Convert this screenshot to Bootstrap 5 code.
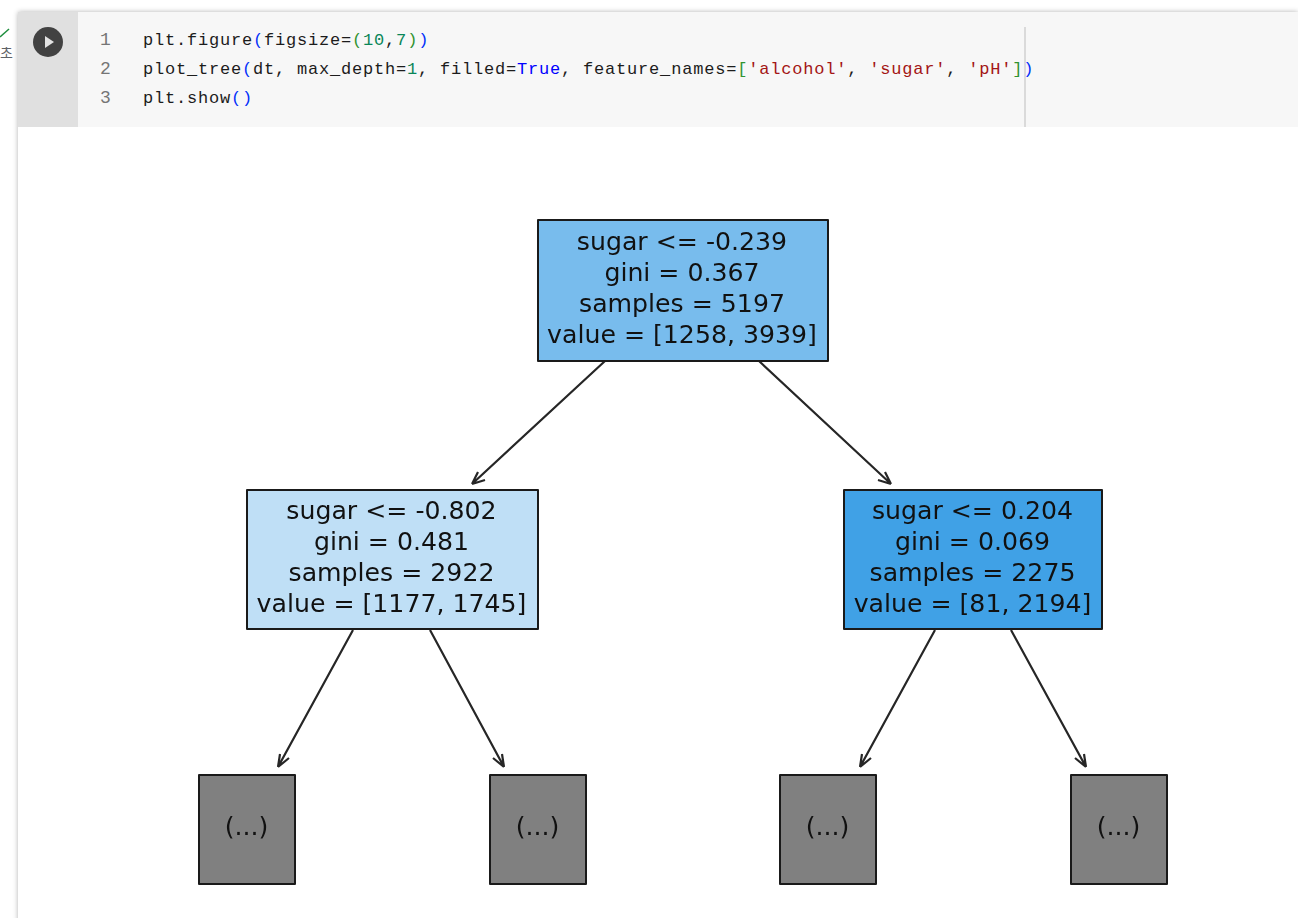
<!DOCTYPE html>
<html lang="ko">
<head>
<meta charset="utf-8">
<title>plot_tree</title>
<link href="https://cdn.jsdelivr.net/npm/bootstrap@5.3.0/dist/css/bootstrap.min.css" rel="stylesheet">
<style>
html,body{height:918px;overflow:hidden;background:#fff}
.page-shell{height:918px;padding-top:12px}
.status-gutter{width:18px;flex:none;padding-top:16px;overflow:hidden}
.status-check{display:block;width:10px;height:11px}
.status-time{display:block;font:14px/14px "Noto Sans CJK KR",sans-serif;color:#5f6368;margin:6px 0 0 0;white-space:nowrap}
.nb-cell{flex:1 1 auto;min-width:0;box-shadow:0 0 5px rgba(0,0,0,.3);background:#fff;height:940px}
.cell-head{height:115px}
.run-gutter{width:60px;flex:none;background:#e0e0e0;padding:15px 0 0 15px}
.run-btn{display:block;width:30px;height:30px}
.code-area{flex:1 1 auto;background:#f7f7f7;padding-top:14px;position:relative;overflow:hidden}
.code-line{height:29px;line-height:29px;font-family:"Liberation Mono",monospace;font-size:17px;letter-spacing:.8px;white-space:pre;color:#1c1c1c;display:flex}
.ln{width:65px;flex:none;text-align:left;padding-left:22px;color:#757575;font-size:18px;letter-spacing:0}
.ruler{position:absolute;left:946px;top:15px;bottom:0;width:2px;background:#dadada}
.pa{color:#0431fa}.pb{color:#319331}.nu{color:#098658}.kw{color:#00f}.st{color:#a31515}
.tree-canvas{position:relative;height:790px;filter:blur(.5px)}
.arrows{position:absolute;left:0;top:0;width:1280px;height:790px}
.tnode{position:absolute;border:2px solid #1a1a1a;border-radius:1px;color:#111;font-family:"DejaVu Sans",sans-serif;font-size:25.2px;line-height:31px;text-align:center;display:flex;flex-direction:column;align-items:center;justify-content:center;white-space:nowrap}
.n-root{left:519px;top:92px;width:292px;height:143px;background:#78bced;padding:0 2px 6px 0}
.n-left{left:228px;top:362px;width:293px;height:141px;background:#bfdff6;padding:0 2px 5px 0}
.n-right{left:825px;top:362px;width:260px;height:141px;background:#40a1e6;padding:0 1px 5px 0}
.n-leaf{top:647px;width:98px;height:111px;background:#808080;padding:0 1px 6px 0}
.l1{left:180px}.l2{left:471px}.l3{left:761px}.l4{left:1052px}
</style>
</head>
<body>
<div class="page-shell d-flex">
  <div class="status-gutter">
    <svg class="status-check" viewBox="0 0 10 11"><path d="M0 9 L9 1" stroke="#1e8e3e" stroke-width="1.5" fill="none"/></svg>
    <span class="status-time">초</span>
  </div>
  <div class="nb-cell">
    <div class="cell-head d-flex">
      <div class="run-gutter">
        <svg class="run-btn" viewBox="0 0 30 30"><circle cx="15" cy="15" r="15" fill="#424242"/><path d="M12 9 L21 15 L12 21 Z" fill="#e3e3e3"/></svg>
      </div>
      <div class="code-area">
        <div class="code-line"><span class="ln">1</span><span>plt.figure<span class="pa">(</span>figsize=<span class="pb">(</span><span class="nu">10</span>,<span class="nu">7</span><span class="pb">)</span><span class="pa">)</span></span></div>
        <div class="code-line"><span class="ln">2</span><span>plot_tree<span class="pa">(</span>dt, max_depth=<span class="nu">1</span>, filled=<span class="kw">True</span>, feature_names=<span class="pb">[</span><span class="st">'alcohol'</span>, <span class="st">'sugar'</span>, <span class="st">'pH'</span><span class="pb">]</span><span class="pa">)</span></span></div>
        <div class="code-line"><span class="ln">3</span><span>plt.show<span class="pa">()</span></span></div>
        <div class="ruler"></div>
      </div>
    </div>
    <div class="tree-canvas">
      <svg class="arrows" viewBox="0 0 1280 790" fill="none" stroke="#262626" stroke-width="2.2">
        <path d="M587 234 L454 357 M454 357 L467 353 M454 357 L460 345"/>
        <path d="M741 234 L873 357 M873 357 L860 353 M873 357 L867 345"/>
        <path d="M335 503 L260 640 M260 640 L271 631 M260 640 L262 627"/>
        <path d="M412 503 L486 640 M486 640 L475 631 M486 640 L484 627"/>
        <path d="M917 503 L842 640 M842 640 L853 631 M842 640 L844 627"/>
        <path d="M993 503 L1068 640 M1068 640 L1057 631 M1068 640 L1066 627"/>
      </svg>
      <div class="tnode n-root"><span>sugar &lt;= -0.239</span><span>gini = 0.367</span><span>samples = 5197</span><span>value = [1258, 3939]</span></div>
      <div class="tnode n-left"><span>sugar &lt;= -0.802</span><span>gini = 0.481</span><span>samples = 2922</span><span>value = [1177, 1745]</span></div>
      <div class="tnode n-right"><span>sugar &lt;= 0.204</span><span>gini = 0.069</span><span>samples = 2275</span><span>value = [81, 2194]</span></div>
      <div class="tnode n-leaf l1">(...)</div>
      <div class="tnode n-leaf l2">(...)</div>
      <div class="tnode n-leaf l3">(...)</div>
      <div class="tnode n-leaf l4">(...)</div>
    </div>
  </div>
</div>
<script src="https://cdn.jsdelivr.net/npm/bootstrap@5.3.0/dist/js/bootstrap.bundle.min.js"></script>
</body>
</html>
